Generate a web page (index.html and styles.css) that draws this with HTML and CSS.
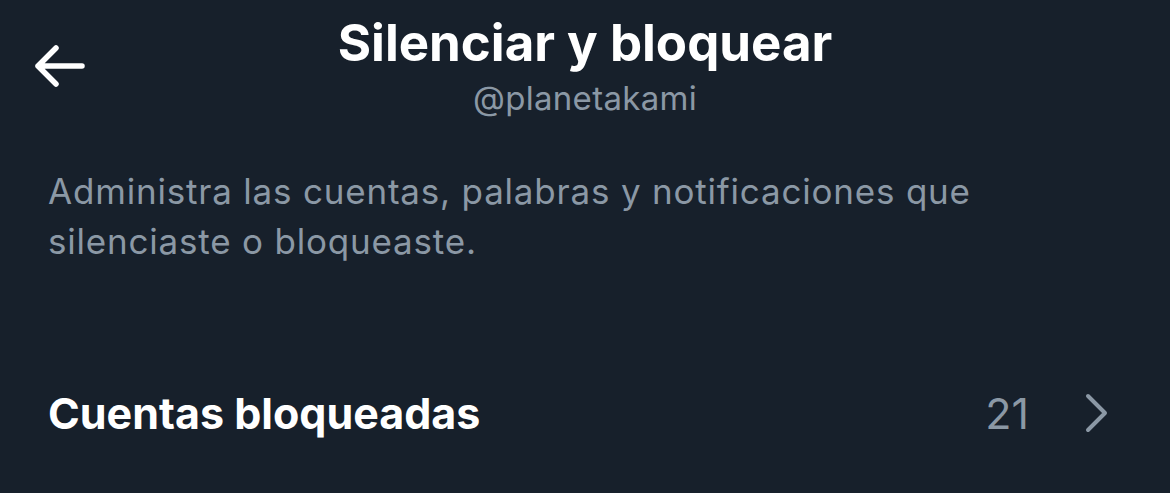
FILE: index.html
```html
<!DOCTYPE html>
<html lang="es">
<head>
    <meta charset="UTF-8">
    <meta name="viewport" content="width=device-width, initial-scale=1.0">
    <title>Silenciar y bloquear</title>
    <link rel="stylesheet" href="styles.css">
</head>
<body>
    <div class="screen">
        <header class="topbar">
            <button class="back-btn" aria-label="Volver">
                <svg viewBox="0 0 52 42" width="52" height="42">
                    <path d="M4 21 H48 M22 3 L4 21 L22 39" fill="none" stroke="#fff" stroke-width="5.5" stroke-linecap="round" stroke-linejoin="round"/>
                </svg>
            </button>
            <div class="title-block">
                <h1 class="title">Silenciar y bloquear</h1>
                <p class="handle">@planetakami</p>
            </div>
        </header>

        <p class="description">Administra las cuentas, palabras y notificaciones que silenciaste o bloqueaste.</p>

        <a class="row" href="#">
            <span class="row-label">Cuentas bloqueadas</span>
            <span class="row-count">21</span>
            <svg class="chevron" viewBox="0 0 24 40" width="24" height="40">
                <path d="M3 3 L20 20 L3 37" fill="none" stroke="#8b98a5" stroke-width="4" stroke-linecap="round" stroke-linejoin="round"/>
            </svg>
        </a>
    </div>
</body>
</html>
```

FILE: styles.css
```css
body {
    margin: 0;
    padding: 0;
    background: #17202b;
    color: #fff;
    font-family: 'Inter', 'Roboto', sans-serif;
    height: 100vh;
    overflow: hidden;
}

.screen {
    padding: 0 48px;
}

.topbar {
    position: relative;
    display: flex;
    justify-content: center;
    padding-top: 12px;
}

.back-btn {
    position: absolute;
    left: -14px;
    top: 45px;
    background: none;
    border: none;
    padding: 0;
    cursor: pointer;
}

.title-block {
    text-align: center;
}

.title {
    margin: 0;
    font-size: 51px;
    font-weight: 700;
    line-height: 62px;
}

.handle {
    margin: 0;
    font-size: 33px;
    letter-spacing: 0.3px;
    line-height: 48px;
    color: #8b98a5;
}

.description {
    margin: 44px 0 0;
    font-size: 35px;
    letter-spacing: 0.8px;
    line-height: 50px;
    color: #8b98a5;
    max-width: 960px;
}

.row {
    display: flex;
    align-items: center;
    margin-top: 121px;
    text-decoration: none;
    color: #fff;
}

.row-label {
    flex: 1;
    font-size: 43px;
    font-weight: 700;
}

.row-count {
    font-size: 43px;
    color: #8b98a5;
    margin-right: 56px;
}

.chevron {
    margin-right: 13px;
}
```
